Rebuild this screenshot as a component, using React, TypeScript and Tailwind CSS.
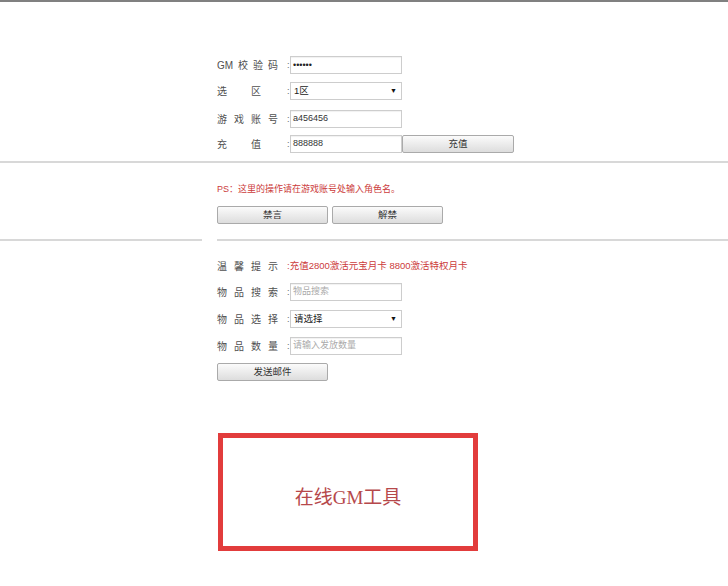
import React from 'react';

const Label: React.FC<{ text: string; prefix?: string }> = ({ text, prefix }) => (
  <div className="w-[70px] flex items-center">
    {prefix && <span className="mr-[5px]">{prefix}</span>}
    <span className={`whitespace-pre ${prefix ? 'tracking-[5px]' : 'tracking-[7px]'}`}>{text}</span>
  </div>
);

const Colon = () => <span className="w-[3px] text-[9px] text-[#666] leading-none">:</span>;

const Field: React.FC<{ value?: string; placeholder?: string; dots?: boolean }> = ({ value, placeholder, dots }) => (
  <div className="w-[112px] h-[18px] border border-[#cdcdcd] bg-white flex items-center pl-[2px] shadow-[inset_0_1px_1px_rgba(0,0,0,0.06)]">
    {dots ? (
      <span className="text-[9px] text-[#222] leading-none">••••••</span>
    ) : value ? (
      <span className="text-[9px] text-[#333]">{value}</span>
    ) : (
      <span className="text-[9px] text-[#aaa]">{placeholder}</span>
    )}
  </div>
);

const Select: React.FC<{ value: string }> = ({ value }) => (
  <div className="w-[112px] h-[18px] border border-[#cdcdcd] bg-white flex items-center justify-between pl-[3px] pr-[4px]">
    <span className="text-[9.5px] text-[#222]">{value}</span>
    <span className="text-[7px] text-[#111]">▼</span>
  </div>
);

const Btn: React.FC<{ children: React.ReactNode; className?: string }> = ({ children, className = '' }) => (
  <button
    className={`w-[111px] h-[18px] border border-[#aaaaaa] rounded-[2px] bg-linear-to-b from-[#fbfbfb] to-[#dddddd] text-[9.5px] text-[#333] flex items-center justify-center ${className}`}
  >
    {children}
  </button>
);

export default function App() {
  return (
    <div className="min-h-[586px] w-full bg-white text-[10px] text-[#505050] font-['Liberation_Sans','Noto_Sans_CJK_SC',sans-serif]">
      <div className="h-[2px] bg-[#808080]" />

      {/* recharge */}
      <div className="pl-[217px] pt-[54px]">
        <div className="flex items-center h-[18px]">
          <Label prefix="GM" text="校验码" />
          <Colon />
          <Field dots />
        </div>
        <div className="flex items-center h-[18px] mt-[8px]">
          <Label text={'选\u3000区'} />
          <Colon />
          <Select value="1区" />
        </div>
        <div className="flex items-center h-[18px] mt-[10px]">
          <Label text="游戏账号" />
          <Colon />
          <Field value="a456456" />
        </div>
        <div className="flex items-center h-[18px] mt-[7px]">
          <Label text={'充\u3000值'} />
          <Colon />
          <Field value="888888" />
          <Btn className="w-[112px]">充值</Btn>
        </div>
      </div>

      <div className="mt-[8px] h-[2px] bg-[#d8d8d8]" />

      {/* ban */}
      <div className="pl-[217px]">
        <p className="mt-[20px] h-[12px] leading-[12px] text-[9px] text-[#cc3b3b]">PS：这里的操作请在游戏账号处输入角色名。</p>
        <div className="flex gap-[4px] mt-[11px]">
          <Btn>禁言</Btn>
          <Btn>解禁</Btn>
        </div>
      </div>

      <div className="mt-[15px] flex">
        <div className="w-[202px] h-[2px] bg-[#d8d8d8]" />
        <div className="ml-[15px] flex-1 h-[2px] bg-[#d8d8d8]" />
      </div>

      {/* mail */}
      <div className="pl-[217px] pt-[16px]">
        <div className="flex items-center h-[18px]">
          <Label text="温馨提示" />
          <span className="text-[9.5px] text-[#cc3b3b]">:充值2800激活元宝月卡 8800激活特权月卡</span>
        </div>
        <div className="flex items-center h-[18px] mt-[8px]">
          <Label text="物品搜索" />
          <Colon />
          <Field placeholder="物品搜索" />
        </div>
        <div className="flex items-center h-[18px] mt-[9px]">
          <Label text="物品选择" />
          <Colon />
          <Select value="请选择" />
        </div>
        <div className="flex items-center h-[18px] mt-[9px]">
          <Label text="物品数量" />
          <Colon />
          <Field placeholder="请输入发放数量" />
        </div>
        <Btn className="mt-[8px]">发送邮件</Btn>

        <div className="ml-[1px] mt-[52px] w-[260px] h-[118px] border-[5px] border-[#e23c3c] flex items-center justify-center pt-[12px]">
          <span className="text-[19px] text-[#b6484b] font-['Liberation_Serif','Noto_Sans_CJK_SC',serif]">在线GM工具</span>
        </div>
      </div>
    </div>
  );
}
